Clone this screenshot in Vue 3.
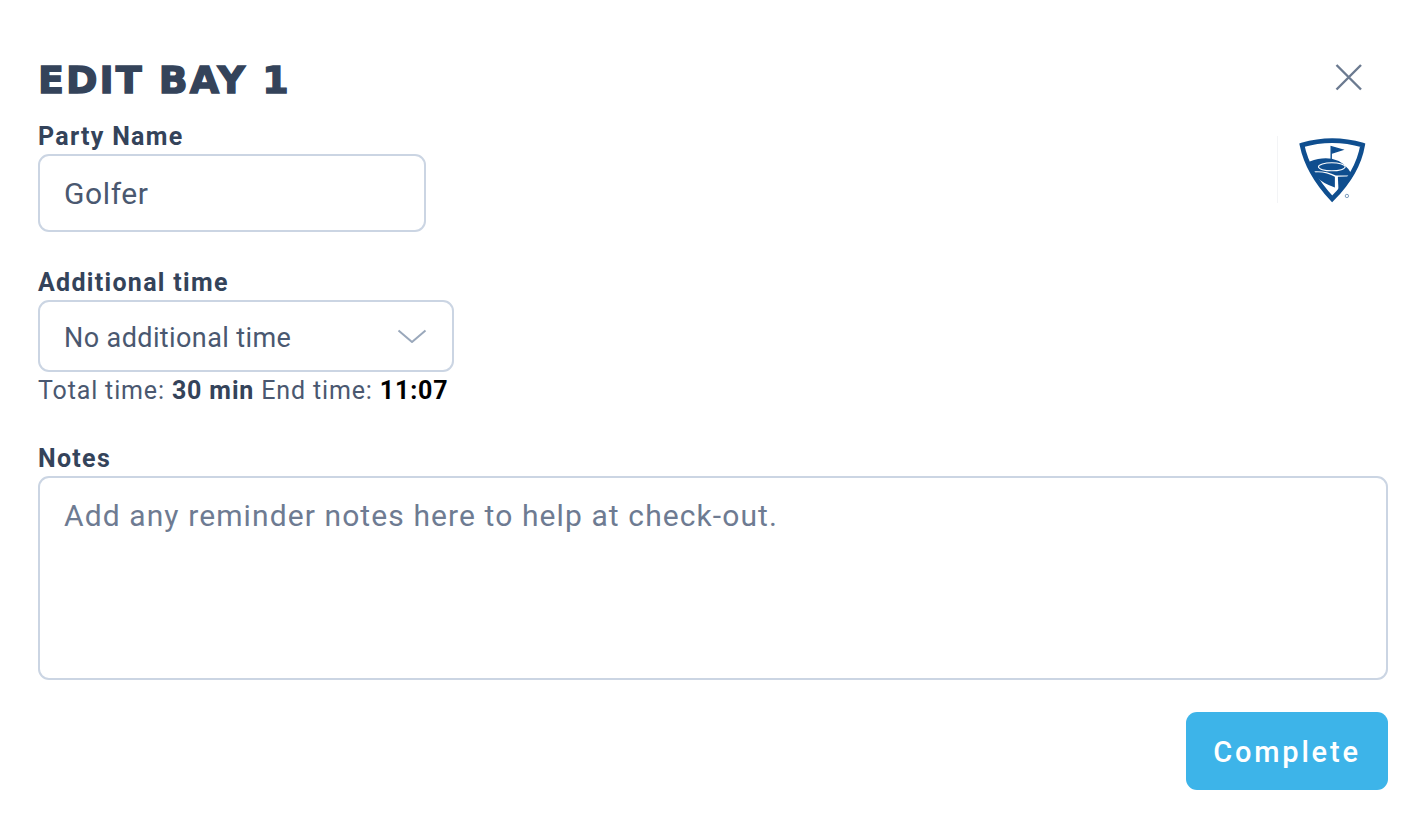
<script setup>
import { ref } from 'vue'
const party = ref('Golfer')
const notes = ref('')
</script>

<template>
  <div class="modal">
    <header class="head">
      <h1 class="title">EDIT BAY 1</h1>
      <button class="close" aria-label="Close">
        <svg width="30" height="30" viewBox="0 0 30 30" fill="none" stroke="#6b7a90" stroke-width="2.4">
          <path d="M2.5 3 L27 27.5 M27 3 L2.5 27.5" />
        </svg>
      </button>
    </header>

    <div class="top">
      <div class="field">
        <label class="label">Party Name</label>
        <input class="input" v-model="party" />
      </div>
      <div class="logo-wrap">
        <svg class="logo" width="71" height="67" viewBox="110 258 212 200">
          <path d="M125 285 Q215 258 306 285 Q292 368 215 446 Q142 368 125 285 Z" fill="#fff" stroke="#0f4e8f" stroke-width="14" stroke-linejoin="miter" />
          <path d="M212 340 V290 L245 299 L214 309" fill="#0f4e8f" stroke="#0f4e8f" stroke-width="4" />
          <path d="M148 334 Q185 320 214 326 Q254 334 276 376 L226 376 Q195 360 152 364 Z" fill="#0f4e8f" />
          <ellipse cx="214" cy="350" rx="40" ry="12" fill="none" stroke="#fff" stroke-width="3" />
          <path d="M156 367 Q195 362 223 380 L223 412 Q185 398 170 382 Z" fill="#0f4e8f" />
          <path d="M232 380 L276 378 Q258 406 234 422 Z" fill="#0f4e8f" />
          <circle cx="259" cy="437" r="5" fill="none" stroke="#5d84ad" stroke-width="2.4" />
        </svg>
      </div>
    </div>

    <div class="field time">
      <label class="label">Additional time</label>
      <div class="select">
        <span class="select-text">No additional time</span>
        <svg width="30" height="14" viewBox="0 0 30 14" fill="none" stroke="#9aa8bb" stroke-width="2">
          <path d="M1.5 1.5 L15 13 L28.5 1.5" />
        </svg>
      </div>
      <p class="summary">Total time: <b>30 min</b> End time: <b class="end">11:07</b></p>
    </div>

    <div class="field notes">
      <label class="label">Notes</label>
      <textarea class="textarea" v-model="notes" placeholder="Add any reminder notes here to help at check-out."></textarea>
    </div>

    <div class="actions">
      <button class="complete">Complete</button>
    </div>
  </div>
</template>

<style>
html, body { margin: 0; background: #fff; }
</style>

<style scoped>
.modal {
  box-sizing: border-box;
  width: 1426px;
  height: 828px;
  padding: 58px 38px 0;
  font-family: Roboto, "Liberation Sans", sans-serif;
  color: #34435a;
  background: #fff;
}
.head {
  display: flex;
  justify-content: space-between;
  align-items: flex-start;
  height: 65px;
}
.title {
  margin: 0;
  font-family: "DejaVu Sans", sans-serif;
  font-weight: 700;
  font-size: 38px;
  line-height: 44px;
  letter-spacing: 2px;
  -webkit-text-stroke: 1.4px #34435a;
  color: #34435a;
}
.close {
  margin: 4px 24px 0 0;
  padding: 0;
  border: 0;
  background: none;
  line-height: 0;
}
.top {
  display: flex;
  justify-content: space-between;
  align-items: flex-start;
}
.field { display: flex; flex-direction: column; align-items: flex-start; }
.label {
  font-size: 25px;
  line-height: 27px;
  font-weight: 700;
  letter-spacing: 1.3px;
  color: #34435a;
  margin-bottom: 4px;
}
.input, .select, .textarea {
  box-sizing: border-box;
  border: 2px solid #cbd5e3;
  border-radius: 11px;
  background: #fff;
  color: #4a5870;
  font-family: inherit;
  outline: none;
}
.input {
  width: 388px;
  height: 78px;
  padding: 0 24px;
  font-size: 30px;
  letter-spacing: .6px;
}
.logo-wrap {
  margin: 13px 20px 0 0;
  padding-left: 19px;
  border-left: 1px solid #f3f4f6;
  height: 67px;
}
.logo { display: block; }
.time { margin-top: 37px; }
.select {
  width: 416px;
  height: 72px;
  padding: 0 25px 0 24px;
  display: flex;
  align-items: center;
  justify-content: space-between;
  font-size: 27px;
  letter-spacing: .4px;
}
.select-text { padding-top: 3px; }
.summary {
  margin: 2px 0 0;
  font-size: 25px;
  line-height: 33px;
  letter-spacing: .85px;
  color: #4a5870;
}
.summary b { color: #34435a; font-weight: 700; }
.summary .end { color: #000; }
.notes { margin-top: 38px; }
.textarea {
  display: block;
  width: 1350px;
  height: 204px;
  padding: 20px 24px;
  resize: none;
  font-size: 30px;
  line-height: 36px;
  letter-spacing: 1.1px;
}
.textarea::placeholder { color: #6e7b92; opacity: 1; }
.actions {
  display: flex;
  justify-content: flex-end;
  margin-top: 32px;
}
.complete {
  width: 202px;
  height: 78px;
  padding: 2px 0 0;
  border: 0;
  border-radius: 11px;
  background: #3db4e9;
  color: #fff;
  font-family: inherit;
  font-size: 29px;
  font-weight: 500;
  letter-spacing: 2.8px;
}
</style>
